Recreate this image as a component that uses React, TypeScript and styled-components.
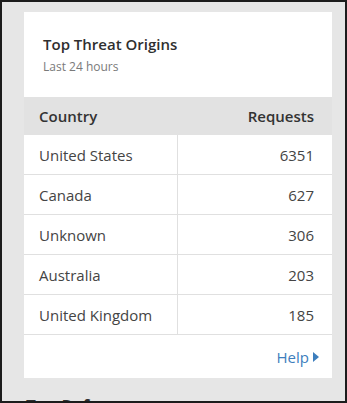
import React from 'react';
import styled, { createGlobalStyle } from 'styled-components';

const GlobalStyle = createGlobalStyle`
    html, body {
        margin: 0;
        padding: 0;
        background: #e6e6e6;
    }
    body {
        font-family: 'Open Sans', 'Liberation Sans', Arial, sans-serif;
    }
`;

const Frame = styled.div`
    box-sizing: border-box;
    width: 347px;
    height: 403px;
    border: 2px solid #1c1c1c;
    background: #e6e6e6;
    overflow: hidden;
    padding: 10px 13px 0 22px;
`;

const Card = styled.div`
    width: 308px;
    background: #ffffff;
`;

const Header = styled.div`
    height: 85px;
    box-sizing: border-box;
    padding: 22px 19px 0 19px;
`;

const Title = styled.div`
    font-size: 15px;
    font-weight: 600;
    color: #2f2f2f;
    line-height: 20px;
`;

const SubTitle = styled.div`
    margin-top: 5px;
    font-size: 12px;
    color: #7a7a7a;
    line-height: 16px;
`;

const Table = styled.table`
    width: 100%;
    border-collapse: collapse;
    table-layout: fixed;
    font-size: 15px;
    color: #444;
`;

const HeadCell = styled.th<{ align?: string }>`
    height: 38px;
    padding: 0 18px 0 15px;
    background: #e2e2e2;
    font-weight: 600;
    color: #333;
    text-align: ${(props) => props.align || 'left'};
    &:first-child {
        width: 120px;
    }
`;

const Cell = styled.td<{ align?: string }>`
    height: 39px;
    padding: 0 18px 0 15px;
    border-bottom: 1px solid #e0e0e0;
    text-align: ${(props) => props.align || 'left'};
    white-space: nowrap;
    &:first-child {
        border-right: 1px solid #e0e0e0;
    }
`;

const Footer = styled.div`
    height: 43px;
    display: flex;
    align-items: center;
    justify-content: flex-end;
    padding-right: 13px;
`;

const HelpLink = styled.a`
    display: inline-flex;
    align-items: center;
    gap: 4px;
    font-size: 15px;
    color: #3d7ebd;
    text-decoration: none;
`;

const NextHeading = styled.div`
    margin-top: 17px;
    padding-left: 2px;
    font-size: 17px;
    font-weight: 700;
    color: #2f2f2f;
`;

const rows = [
    { country: 'United States', requests: 6351 },
    { country: 'Canada', requests: 627 },
    { country: 'Unknown', requests: 306 },
    { country: 'Australia', requests: 203 },
    { country: 'United Kingdom', requests: 185 },
];

export default function App() {
    return (
        <>
            <GlobalStyle />
            <Frame>
                <Card>
                    <Header>
                        <Title>Top Threat Origins</Title>
                        <SubTitle>Last 24 hours</SubTitle>
                    </Header>
                    <Table>
                        <thead>
                            <tr>
                                <HeadCell>Country</HeadCell>
                                <HeadCell align="right">Requests</HeadCell>
                            </tr>
                        </thead>
                        <tbody>
                            {rows.map((row) => (
                                <tr key={row.country}>
                                    <Cell>{row.country}</Cell>
                                    <Cell align="right">{row.requests}</Cell>
                                </tr>
                            ))}
                        </tbody>
                    </Table>
                    <Footer>
                        <HelpLink href="#">
                            Help
                            <svg width="6" height="10" viewBox="0 0 6 10">
                                <path d="M0 0 L6 5 L0 10 Z" fill="#3d7ebd" />
                            </svg>
                        </HelpLink>
                    </Footer>
                </Card>
                <NextHeading>Top Referrers</NextHeading>
            </Frame>
        </>
    );
}
